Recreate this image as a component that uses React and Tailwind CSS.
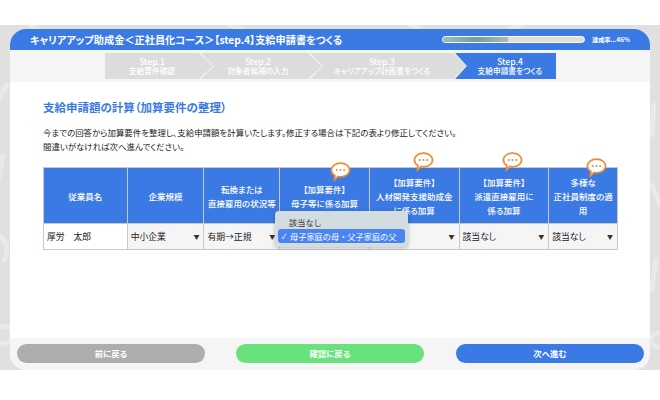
const font = { fontFamily: '"Noto Sans CJK JP", "Noto Sans", sans-serif' };

const steps = [
  { label: "Step.1", sub: "支給要件確認", cls: "w-[108px] [clip-path:polygon(0_0,94px_0,100%_50%,94px_100%,0_100%)] bg-[#dcdcdc] pr-[14px]" },
  { label: "Step.2", sub: "対象者候補の入力", cls: "w-[122px] -ml-[13px] [clip-path:polygon(1px_0,108px_0,100%_50%,108px_100%,1px_100%,14px_50%)] bg-[#dcdcdc] pl-[8px] pr-[14px]" },
  { label: "Step.3", sub: "キャリアアップ計画書をつくる", cls: "w-[158px] -ml-[13px] [clip-path:polygon(1px_0,144px_0,100%_50%,144px_100%,1px_100%,14px_50%)] bg-[#dcdcdc] pr-[12px]" },
  { label: "Step.4", sub: "支給申請書をつくる", cls: "w-[101px] -ml-[12px] [clip-path:polygon(0_0,100%_0,100%_100%,0_100%,12px_50%)] bg-[#3b7ae4] pl-[9px]" },
];

const columns = [
  { w: "w-[83px]", lines: ["従業員名"], value: "厚労　太郎", noArrow: true, bg: "bg-white" },
  { w: "w-[77px]", lines: ["企業規模"], value: "中小企業" },
  { w: "w-[76px]", lines: ["転換または", "直接雇用の状況等"], value: "有期→正規" },
  // the open menu covers this cell
  { w: "w-[90px]", lines: ["【加算要件】", "母子等に係る加算"], value: "", noArrow: true },
  { w: "w-[90px]", lines: ["【加算要件】", "人材開発支援助成金", "に係る加算"], value: "" },
  { w: "w-[90px]", lines: ["【加算要件】", "派遣直接雇用に", "係る加算"], value: "該当なし" },
  { w: "w-[69px]", lines: ["多様な", "正社員制度の適", "用"], value: "該当なし" },
];

const bubbles = [
  "left-[330px] top-[162px]",
  "left-[413px] top-[152px]",
  "left-[502px] top-[152px]",
  "left-[586px] top-[158px]",
];

const Bubble = ({ className }) => (
  <svg className={`absolute ${className}`} width="21" height="20" viewBox="0 0 21 20">
    <path
      d="M10.5 1.2C15.6 1.2 19.6 4 19.6 8s-4 6.8-9.1 6.8c-.9 0-1.7-.1-2.5-.3L4.5 18l.4-4.6C2.800 12.200 1.400 10.300 1.400 8c0-4 4-6.800 9.100-6.800z"
      fill="#fff"
      stroke="#ee8a35"
      strokeWidth="1.700"
    />
    <circle cx="6.800" cy="8" r="1" fill="#ee8a35" />
    <circle cx="10.500" cy="8" r="1" fill="#ee8a35" />
    <circle cx="14.200" cy="8" r="1" fill="#ee8a35" />
  </svg>
);

// faint marks in the grey backdrop
const Backdrop = () => (
  <svg className="absolute left-0 top-0" width="660" height="345" viewBox="0 0 660 345">
    <g fill="none" stroke="#e9e9e9" strokeWidth="5" strokeLinecap="round">
      <path d="M-2 75L7 60" />
      <path d="M3 130L-2 155" />
      <path d="M-2 210C6 215 10 225 4 235" />
      <circle cx="3" cy="310" r="9" />
      <path d="M654 80L652 110" />
      <path d="M652 160L662 185" />
      <path d="M656 235L652 265" />
      <circle cx="658" cy="315" r="7" />
      <path d="M30 0L36 4" />
      <path d="M230 0L240 4" />
      <path d="M410 0L420 4" />
      <path d="M510 4L520 0" />
    </g>
  </svg>
);

const App = () => {
  return (
    <div className="relative w-[660px] h-[400px] bg-white overflow-hidden [font-feature-settings:'palt']" style={font}>
      <div className="mt-[25px] h-[345px] bg-[#e0e0e0] px-[10px] pt-[4px] absolute top-0 left-0 w-full">
        <Backdrop />
        <div className="relative h-[341px] bg-[#f5f5f5] rounded-[16px] overflow-hidden flex flex-col">
          <div className="h-[21px] bg-[#3b7ae4] flex items-center pl-[20px] text-white">
            <div className="w-[412px] text-[10.200px] font-bold whitespace-nowrap">
              キャリアアップ助成金＜正社員化コース＞【step.4】支給申請書をつくる
            </div>
            <div className="w-[143px] h-[7px] rounded-full bg-[#dedede] border border-white overflow-hidden">
              <div className="w-[46%] h-full bg-gradient-to-r from-[#9dbcc8] via-[#6f9fa6] to-[#a8bcb8]" />
            </div>
            <div className="ml-[7px] text-[6.200px] font-bold whitespace-nowrap">達成率...46%</div>
          </div>

          <div className="h-[32px] pt-[3px] pl-[95px] flex items-start">
            {steps.map((s) => (
              <div
                key={s.label}
                className={`h-[26px] flex flex-col items-center justify-center text-white leading-[10px] ${s.cls}`}
              >
                <div className="text-[8.500px] font-medium">{s.label}</div>
                <div className="text-[7.700px] font-medium whitespace-nowrap">{s.sub}</div>
              </div>
            ))}
          </div>

          <div className="h-[256px] bg-white pl-[33px] pt-[16px]">
            <h1 className="text-[11.500px] leading-[18px] font-bold text-[#3b7ae4]">
              支給申請額の計算（加算要件の整理）
            </h1>
            <p className="mt-[9px] text-[8.450px] leading-[14px] text-[#222]">
              今までの回答から加算要件を整理し、支給申請額を計算いたします。修正する場合は下記の表より修正してください。
              <br />
              間違いがなければ次へ進んでください。
            </p>

            <div className="mt-[14px] flex w-[575px] border border-[#c8c8c8]">
              {columns.map((c, i) => (
                <div key={i} className={`${c.w} flex flex-col ${i > 0 ? "border-l border-[#c8c8c8]" : ""}`}>
                  <div className="h-[55px] bg-[#3b7ae4] flex flex-col items-center justify-center text-white text-[8.500px] leading-[14px] font-medium whitespace-nowrap">
                    {c.lines.map((l) => (
                      <div key={l}>{l}</div>
                    ))}
                  </div>
                  <div
                    className={`h-[26px] flex items-center justify-between px-[3px] text-[8.800px] text-[#222] border-t border-[#c8c8c8] ${
                      c.bg || "bg-[#f5f5f5]"
                    }`}
                  >
                    <span>{c.value}</span>
                    {!c.noArrow && <span className="text-[6px] text-[#333] pr-[1px]">▼</span>}
                  </div>
                </div>
              ))}
            </div>
          </div>

          <div className="flex-1 flex items-center justify-between pl-[7px] pr-[6px] pb-[2px]">
            <button className="w-[188px] h-[19px] rounded-full bg-[#acadae] text-white text-[8.400px] font-bold">前に戻る</button>
            <button className="w-[188px] h-[19px] mr-[1px] rounded-full bg-[#68e27c] text-white text-[8.400px] font-bold">確認に戻る</button>
            <button className="w-[188px] h-[19px] rounded-full bg-[#3b7ae4] text-white text-[8.400px] font-bold">次へ進む</button>
          </div>
        </div>
      </div>

      {bubbles.map((b) => (
        <Bubble key={b} className={b} />
      ))}

      <div className="absolute left-[275px] top-[211px] w-[133px] h-[36px] rounded-[4px] bg-[#d3dde1] shadow-[0_1px_4px_rgba(0,0,0,0.25)] pt-[4px] px-[3px] text-[8.200px] [font-feature-settings:normal]">
        <div className="h-[14px] leading-[14px] pl-[11px] text-[#333]">該当なし</div>
        <div className="h-[14px] leading-[14px] rounded-[3px] bg-[#4a84ee] text-white flex items-center whitespace-nowrap">
          <span className="w-[12px] text-center text-[7px]">✓</span>
          母子家庭の母・父子家庭の父
        </div>
      </div>
    </div>
  );
};

export default App;
